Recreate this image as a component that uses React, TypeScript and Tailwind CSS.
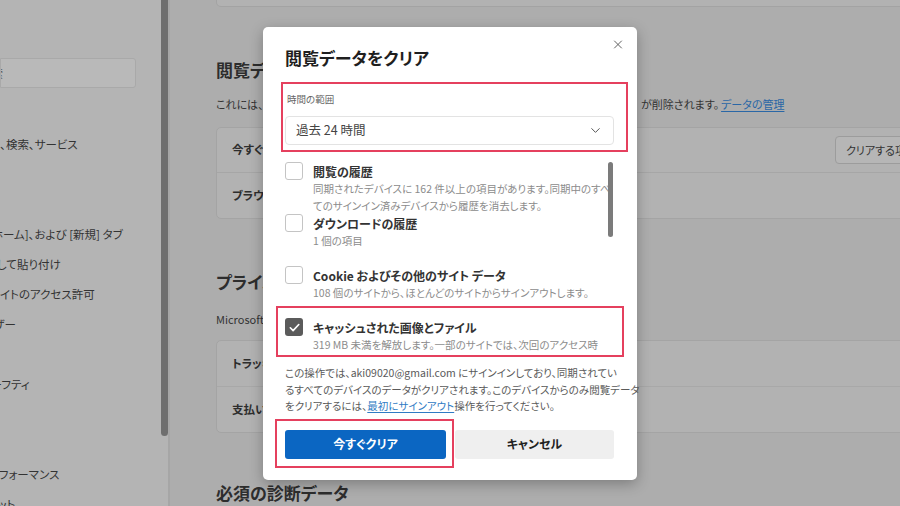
import { ChevronDown, X } from "lucide-react";

const SIDEBAR_ROWS: { text: string; shift: string }[] = [
  { text: "", shift: "" },
  { text: "プライバシー、検索、サービス", shift: "-ml-[63px]" },
  { text: "", shift: "" },
  { text: "", shift: "" },
  { text: "[ホーム]、および [新規] タブ", shift: "-ml-[12px]" },
  { text: "コピーして貼り付け", shift: "-ml-[36px]" },
  { text: "サイトのアクセス許可", shift: "-ml-[11px]" },
  { text: "既定のブラウザー", shift: "-ml-[71px]" },
  { text: "", shift: "" },
  { text: "ファミリー セーフティ", shift: "-ml-[72px]" },
  { text: "", shift: "" },
  { text: "", shift: "" },
  { text: "システムとパフォーマンス", shift: "-ml-[64px]" },
  { text: "設定のリセット", shift: "-ml-[57px]" },
];

interface ClearItem {
  title: string;
  desc: string[];
  checked?: boolean;
}

const ITEMS: ClearItem[] = [
  {
    title: "閲覧の履歴",
    desc: [
      "同期されたデバイスに 162 件以上の項目があります。同期中のすべ",
      "てのサインイン済みデバイスから履歴を消去します。",
    ],
  },
  { title: "ダウンロードの履歴", desc: ["1 個の項目"] },
  {
    title: "Cookie およびその他のサイト データ",
    desc: ["108 個のサイトから、ほとんどのサイトからサインアウトします。"],
  },
  {
    title: "キャッシュされた画像とファイル",
    desc: ["319 MB 未満を解放します。一部のサイトでは、次回のアクセス時", "に読み込みが遅くなる可能性があります。"],
    checked: true,
  },
];

function Checkbox({ checked }: { checked?: boolean }) {
  if (checked) {
    return (
      <div className="w-[18px] h-[18px] shrink-0 rounded-[3px] bg-[#5b5b5b] flex items-center justify-center">
        <svg width="13" height="13" viewBox="0 0 14 14" fill="none">
          <path d="M2.5 7.3l3 3L11.6 3.8" stroke="#fff" strokeWidth="1.8" strokeLinecap="round" strokeLinejoin="round" />
        </svg>
      </div>
    );
  }
  return <div className="w-[18px] h-[18px] shrink-0 rounded-[3px] border border-[#c4c4c4] bg-white" />;
}

function Sidebar() {
  return (
    <div className="w-[161px] shrink-0 bg-[#b4b4b4] flex flex-col overflow-hidden">
      <div className="mt-[58px] h-[30px] shrink-0 w-[136px] bg-[#b9b9b9] border border-[#a9a9a9] rounded-r-[3px] flex items-center overflow-hidden">
        <span className="-ml-[9px] text-[11px] text-[#5a5a5a]">索</span>
      </div>
      <div className="mt-[12px] flex flex-col">
        {SIDEBAR_ROWS.map((r, i) => (
          <div key={i} className="h-[30px] shrink-0 flex items-center whitespace-nowrap overflow-hidden">
            <span className={`text-[11.5px] text-[#333] ${r.shift}`}>{r.text}</span>
          </div>
        ))}
      </div>
    </div>
  );
}

function MainContent() {
  return (
    <div className="flex-1 bg-[#adadad] pl-[46px] flex flex-col overflow-hidden">
      <div className="h-[7px] shrink-0 w-[760px] bg-[#b2b2b2] border-x border-b border-[#a3a3a3] rounded-b-[5px]" />

      <h2 className="mt-[51px] h-[24px] leading-[24px] text-[17px] font-bold text-[#2d2d2d]">閲覧データをクリア</h2>
      <div className="mt-[14px] h-[16px] flex items-center whitespace-nowrap text-[11px] text-[#333]">
        <span className="w-[425px] overflow-hidden">これには、このプロファイルの閲覧データ</span>
        <span>が削除されます。</span>
        <span className="ml-[2px] text-[#2a67a6] underline underline-offset-2">データの管理</span>
      </div>

      <div className="mt-[15px] shrink-0 w-[760px] bg-[#b2b2b2] border border-[#a4a4a4] rounded-[5px] flex flex-col">
        <div className="h-[45px] flex items-center pl-[15px] border-b border-[#a6a6a6]">
          <span className="flex-1 text-[11.5px] font-bold text-[#2d2d2d]">今すぐ閲覧データをクリア</span>
          <div className="w-[130px] mr-[10px] h-[28px] border border-[#9c9c9c] bg-[#b6b6b6] rounded-[4px] flex items-center pl-[10px] text-[11px] text-[#333] whitespace-nowrap">
            クリアする項目の選択
          </div>
        </div>
        <div className="h-[45px] flex items-center pl-[15px]">
          <span className="text-[11.5px] font-bold text-[#2d2d2d]">ブラウザーを閉じるたびにクリアするデータを選択する</span>
        </div>
      </div>

      <h2 className="mt-[51px] h-[24px] leading-[24px] text-[17px] font-bold text-[#2d2d2d]">プライバシー</h2>
      <p className="mt-[17px] h-[16px] leading-[16px] text-[11px] text-[#333] whitespace-nowrap">
        Microsoft では、お客様のプライバシーを尊重します。
      </p>

      <div className="mt-[13px] shrink-0 w-[760px] bg-[#b2b2b2] border border-[#a4a4a4] rounded-[5px] flex flex-col">
        <div className="h-[46px] flex items-center pl-[15px] border-b border-[#a8a8a8]">
          <span className="text-[11.5px] font-bold text-[#2d2d2d]">トラッキング防止</span>
        </div>
        <div className="h-[45px] flex items-center pl-[15px]">
          <span className="text-[11.5px] font-bold text-[#2d2d2d]">支払い情報を保存して入力する</span>
        </div>
      </div>

      <h2 className="mt-[48px] h-[24px] shrink-0 leading-[24px] text-[17px] font-bold text-[#2d2d2d]">必須の診断データ</h2>
    </div>
  );
}

function ClearDialog() {
  return (
    <div className="absolute left-[263px] top-[27px] w-[374px] h-[453px] bg-white rounded-[5px] shadow-[0_4px_14px_rgba(0,0,0,0.28)] pl-[22px] pr-[23px] pt-[19px] flex flex-col">
      <button className="absolute left-[348px] top-[10px] w-[14px] h-[14px] flex items-center justify-center text-[#555]">
        <X size={15} strokeWidth={1.6} />
      </button>

      <h1 className="h-[24px] leading-[24px] text-[17px] font-semibold text-[#1f1f1f]">閲覧データをクリア</h1>

      <div className="mt-[22px] h-[14px] leading-[14px] pl-[2px] text-[9.5px] text-[#666]">時間の範囲</div>
      <div className="mt-[10px] h-[29px] border border-[#e3e3e3] rounded-[4px] flex items-center pl-[10px] pr-[10px]">
        <span className="flex-1 text-[12.5px] text-[#444]">過去 24 時間</span>
        <ChevronDown size={15} strokeWidth={1.6} className="text-[#555]" />
      </div>

      <div className="relative mt-[17px] h-[190px] shrink-0 overflow-hidden flex flex-col">
        {ITEMS.map((it) => (
          <div key={it.title} className="h-[52px] shrink-0 flex gap-[10px]">
            <Checkbox checked={it.checked} />
            <div className="flex flex-col whitespace-nowrap">
              <span className="h-[19px] leading-[19px] text-[12px] font-bold text-[#333]">{it.title}</span>
              {it.desc.map((d) => (
                <span key={d} className="h-[16.5px] leading-[16.5px] text-[10.5px] text-[#8c8c8c]">
                  {d}
                </span>
              ))}
            </div>
          </div>
        ))}
        <div className="absolute right-[1px] top-0 w-[5px] h-[75px] rounded-full bg-[#7b7b7b]" />
      </div>

      <p className="mt-[13px] text-[10.5px] leading-[16.5px] text-[#5a5a5a] whitespace-nowrap">
        この操作では、aki09020@gmail.com にサインインしており、同期されてい
        <br />
        るすべてのデバイスのデータがクリアされます。このデバイスからのみ閲覧データ
        <br />
        をクリアするには、
        <span className="text-[#2f7bc4] underline underline-offset-2">最初にサインアウト</span>
        操作を行ってください。
      </p>

      <div className="mt-[15px] flex gap-[9px]">
        <button className="w-[161px] h-[29px] rounded-[3px] bg-[#0b66c2] text-white text-[12px] font-bold">今すぐクリア</button>
        <button className="flex-1 h-[29px] rounded-[3px] bg-[#efefef] text-[#222] text-[12px] font-bold">キャンセル</button>
      </div>

      {/* annotation boxes */}
      <div className="absolute left-[18px] top-[55px] w-[347px] h-[70px] border-2 border-[#e5405e] pointer-events-none" />
      <div className="absolute left-[13px] top-[279px] w-[348px] h-[51px] border-2 border-[#e5405e] pointer-events-none" />
      <div className="absolute left-[12px] top-[392px] w-[179px] h-[49px] border-2 border-[#e5405e] pointer-events-none" />
    </div>
  );
}

export default function App() {
  return (
    <div className="relative w-[900px] h-[506px] overflow-hidden flex font-['Noto_Sans_CJK_JP','Noto_Sans',sans-serif] [font-feature-settings:'palt']">
      <Sidebar />
      <div className="w-[7px] shrink-0 bg-[#b4b4b4]">
        <div className="h-[436px] bg-[#6e6e6e] rounded-b-full" />
      </div>
      <div className="w-[2px] shrink-0 bg-[#a6a6a6]" />
      <MainContent />
      <ClearDialog />
    </div>
  );
}
